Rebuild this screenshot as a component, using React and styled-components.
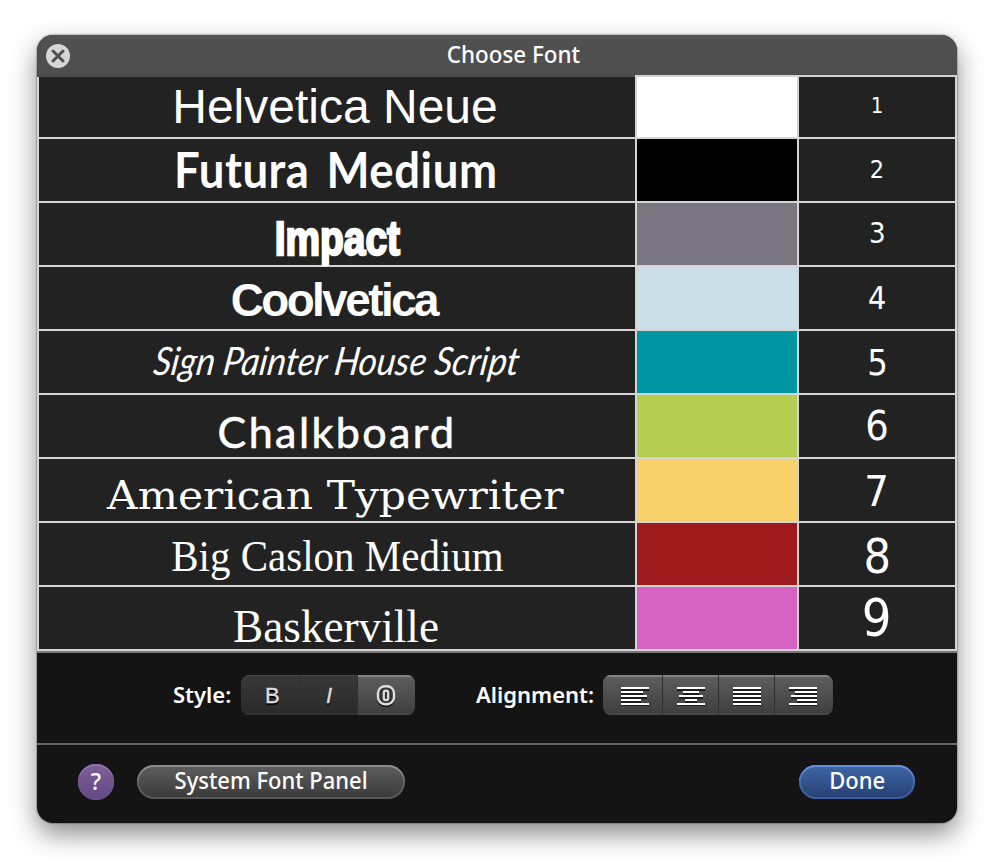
import React from "react";
import styled, { createGlobalStyle, css } from "styled-components";

const GlobalStyle = createGlobalStyle`
  * { box-sizing: border-box; }
  body { margin: 0; background: #fff; overflow: hidden; }
`;

const uiFont = css`
  font-family: "Noto Sans", "Open Sans", sans-serif;
  font-size: 23px;
  font-weight: 500;
  line-height: 30px;
  color: #fff;
`;

const Page = styled.main`
  width: 994px;
  height: 862px;
  padding: 35px 37px;
  background: #fff;
`;

const Window = styled.section`
  width: 920px;
  height: 788px;
  display: flex;
  flex-direction: column;
  overflow: hidden;
  border-radius: 16px;
  background: #141414;
  box-shadow: 0 0 1px 1px rgba(0, 0, 0, 0.2), 0 11px 26px rgba(0, 0, 0, 0.46);
`;

const TitleBar = styled.header`
  height: 40px;
  flex: none;
  display: grid;
  grid-template-columns: 42px 1fr 10px;
  align-items: center;
  background: linear-gradient(#565656, #505050 6px, #4e4e4e);
`;

const CloseButton = styled.button`
  width: 24px;
  height: 24px;
  margin: 2px 0 0 9px;
  padding: 0;
  border: 0;
  background: none;
  svg { display: block; }
`;

const Title = styled.h1`
  ${uiFont}
  margin: 0;
  text-align: center;
`;

const Scaled = styled.span`
  display: inline-block;
  white-space: nowrap;
  transform: translate(${(p) => p.$x || 0}px, ${(p) => p.$y || 0}px) scaleX(${(p) => p.$scale || 1}) skewX(${(p) => p.$skew || 0}deg);
`;

const Table = styled.div`
  flex: none;
  height: 578px;
  display: grid;
  grid-template-rows: 62px repeat(8, 64px) 4px;
  background: linear-gradient(#4e4e4e, #4e4e4e) 0 0 / 598px 2px no-repeat, #d4d4d4;
`;

const Row = styled.div`
  display: grid;
  grid-template-columns: 596px 160px 156px;
  column-gap: 2px;
  padding: 2px 2px 0;
`;

const TableEnd = styled.div`
  border-top: 2px solid #d4d4d4;
  background: #7b7779;
`;

const Cell = styled.div`
  display: flex;
  align-items: center;
  justify-content: center;
  min-width: 0;
  background: #222;
`;

const Swatch = styled.div`
  background: ${(p) => p.$color};
`;

const Sample = styled(Scaled)`
  color: #fff;
  line-height: 46px;
  font-family: ${(p) => p.$family};
  font-size: ${(p) => p.$size}px;
  font-weight: ${(p) => p.$weight || 400};
  font-style: ${(p) => (p.$italic ? "italic" : "normal")};
  letter-spacing: ${(p) => p.$tracking || 0}px;
  word-spacing: ${(p) => p.$gap || 0}px;
  -webkit-text-stroke: ${(p) => p.$stroke || 0}px #fff;
  stroke-linejoin: round;
`;

const Toolbar = styled.div`
  height: 90px;
  flex: none;
  display: flex;
  align-items: flex-start;
  padding: 22px 0 0 136px;
`;

const Label = styled.span`
  ${uiFont}
  font-size: 22px;
  font-weight: 600;
  width: ${(p) => p.$width}px;
  padding-top: 4px;
  white-space: nowrap;
`;

const Segments = styled.div`
  display: flex;
  height: 40px;
  margin-right: ${(p) => p.$after || 0}px;
  border-radius: 8px;
  overflow: hidden;
`;

const Segment = styled.button`
  width: ${(p) => p.$width}px;
  height: 40px;
  display: flex;
  align-items: center;
  padding: 1px 0 0 ${(p) => p.$inset}px;
  border: 0;
  border-left: ${(p) => (p.$first ? "0" : "1px solid #303030")};
  color: #ddd;
  font: 22px/30px "Liberation Sans", Arial, sans-serif;
  -webkit-text-stroke: 0.4px #ddd;
  text-shadow: 0 2px 1px #000;
  background: ${(p) => (p.$dark ? "linear-gradient(#393939, #292929)" : "linear-gradient(#5f5f5f, #3d3d3d)")};
  box-shadow: inset 0 ${(p) => (p.$dark ? "1px 0 #484848" : "2px 0 #858183")}, inset 0 -2px 1px ${(p) => (p.$dark ? "#343434" : "#484848")};
  svg { display: block; flex: none; }
`;

const Footer = styled.footer`
  flex: 1;
  display: flex;
  align-items: flex-start;
  padding: 20px 42px 0 41px;
  border-top: 2px solid #656565;
`;

const HelpButton = styled.button`
  ${uiFont}
  width: 36px;
  height: 36px;
  margin: -1px 23px 0 0;
  padding: 0 0 2px;
  border: 0;
  border-radius: 50%;
  background: linear-gradient(#805f9c, #604881);
  box-shadow: inset 0 2px 1px #9072ac, inset 0 0 2px 1px #6f5489;
`;

const PillButton = styled.button`
  ${uiFont}
  width: ${(p) => p.$width}px;
  height: 34px;
  padding: 0 0 4px;
  border: 0;
  border-radius: 17px;
  background: ${(p) => (p.$primary ? "linear-gradient(#3f67a8, #253f70)" : "linear-gradient(#5e5e5e, #393939)")};
  box-shadow: ${(p) => (p.$primary
    ? "inset 0 2px 0 #5f90e3, inset 0 0 0 2px rgba(80, 130, 220, 0.45)"
    : "inset 0 2px 0 #8b8b8b, inset 0 0 0 2px rgba(150, 150, 150, 0.32)")};
`;

const Spacer = styled.div`
  flex: 1;
`;

const sans = '"Liberation Sans", Arial, sans-serif';
const serif = '"Liberation Serif", serif';

const rows = [
  { name: "Helvetica Neue", color: "#ffffff", face: { family: sans, size: 48, x: -2 }, digit: [22, -1] },
  { name: "Futura Medium", color: "#000000", face: { family: "Lato, sans-serif", size: 50, weight: 700, gap: 6, tracking: 0.6, scale: 0.91, x: -1, y: -1 }, digit: [25, 0] },
  { name: "Impact", color: "#797681", face: { family: sans, size: 48, weight: 700, stroke: 2.4, scale: 0.81, y: 5 }, digit: [29, -1] },
  { name: "Coolvetica", color: "#cadfe8", face: { family: sans, size: 47, weight: 700, tracking: -2.6, scale: 0.975, x: -3, y: 2 }, digit: [32, 0] },
  { name: "Sign Painter House Script", color: "#0095a3", face: { family: "Lato, sans-serif", size: 39, italic: true, scale: 0.9, skew: -9, y: -2 }, digit: [36, 1] },
  { name: "Chalkboard", color: "#b5cd50", face: { family: "Lato, sans-serif", size: 43, stroke: 0.6, tracking: 2.4, y: 6 }, digit: [41, 0] },
  { name: "American Typewriter", color: "#f7d16a", face: { family: '"DejaVu Serif", serif', size: 40, scale: 1.06, x: -2, y: 5 }, digit: [43, 1] },
  { name: "Big Caslon Medium", color: "#9e1b1d", face: { family: serif, size: 44, scale: 0.932, y: 3 }, digit: [48, 2] },
  { name: "Baskerville", color: "#d663c2", face: { family: serif, size: 47, scale: 0.962, x: -1, y: 8 }, digit: [52, 0] },
];

const alignments = [
  { name: "Left", bars: [[0, 28], [0, 22], [0, 26], [0, 20], [0, 28]] },
  { name: "Center", bars: [[0, 28], [6, 16], [2, 24], [8, 12], [0, 28]] },
  { name: "Justify", bars: [[0, 28], [0, 28], [0, 28], [0, 28], [0, 28]] },
  { name: "Right", bars: [[0, 28], [6, 22], [2, 26], [8, 20], [0, 28]] },
];

function AlignIcon({ bars }) {
  return (
    <svg width="28" height="20" viewBox="0 0 28 20" shapeRendering="crispEdges">
      {bars.map(([x, w], i) => (
        <g key={i}>
          <rect x={x} y={i * 4 + 3} width={w} height="2" fill="#1c1c1c" />
          <rect x={x} y={i * 4 + 1} width={w} height="2" fill="#fff" />
        </g>
      ))}
    </svg>
  );
}

function OutlineIcon() {
  return (
    <svg width="20" height="24" viewBox="0 0 20 24" fill="none">
      <rect x="2" y="4" width="16" height="18" rx="7" stroke="#151515" strokeWidth="2" />
      <rect x="2" y="2.2" width="16" height="18" rx="7" fill="#353535" stroke="#ddd" strokeWidth="2.4" />
      <rect x="7.8" y="6.7" width="4.4" height="9.4" rx="2.2" fill="#333" stroke="#ddd" strokeWidth="2.2" />
    </svg>
  );
}

function FontRow({ index, row }) {
  const { family, size, weight, italic, tracking, gap, stroke, scale, skew, x, y } = row.face;
  return (
    <Row>
      <Cell>
        <Sample $family={family} $size={size} $weight={weight} $italic={italic} $tracking={tracking}
          $gap={gap} $stroke={stroke} $scale={scale} $skew={skew} $x={x} $y={y}>{row.name}</Sample>
      </Cell>
      <Swatch $color={row.color} />
      <Cell>
        <Sample $family={'"DejaVu Sans", sans-serif'} $size={row.digit[0]} $scale={0.9} $y={row.digit[1]}>
          {index + 1}
        </Sample>
      </Cell>
    </Row>
  );
}

export default function App() {
  return (
    <Page>
      <GlobalStyle />
      <Window>
        <TitleBar>
          <CloseButton aria-label="Close">
            <svg width="24" height="24" viewBox="0 0 24 24">
              <circle cx="12" cy="12" r="12" fill="#d6d6d6" />
              <path d="M7 7l10 10M17 7L7 17" stroke="#4f4f4f" strokeWidth="3" strokeLinecap="round" />
            </svg>
          </CloseButton>
          <Title><Scaled $scale={0.975} $y={-1}>Choose Font</Scaled></Title>
        </TitleBar>
        <Table>
          {rows.map((row, i) => <FontRow key={row.name} row={row} index={i} />)}
          <TableEnd />
        </Table>
        <Toolbar>
          <Label $width={68}>Style:</Label>
          <Segments $after={61}>
            <Segment $first $dark $width={59} $inset={24}>B</Segment>
            <Segment $dark $width={57} $inset={25}><i>I</i></Segment>
            <Segment $width={58} $inset={18} aria-label="Outline"><OutlineIcon /></Segment>
          </Segments>
          <Label $width={127}>Alignment:</Label>
          <Segments>
            {alignments.map((a, i) => (
              <Segment key={a.name} $first={i === 0} $width={i % 3 === 0 ? 59 : 56} $inset={i === 0 ? 18 : 14} aria-label={a.name}>
                <AlignIcon bars={a.bars} />
              </Segment>
            ))}
          </Segments>
        </Toolbar>
        <Footer>
          <HelpButton>?</HelpButton>
          <PillButton $width={268}><Scaled $scale={0.955}>System Font Panel</Scaled></PillButton>
          <Spacer />
          <PillButton $width={116} $primary><Scaled $scale={0.955}>Done</Scaled></PillButton>
        </Footer>
      </Window>
    </Page>
  );
}
